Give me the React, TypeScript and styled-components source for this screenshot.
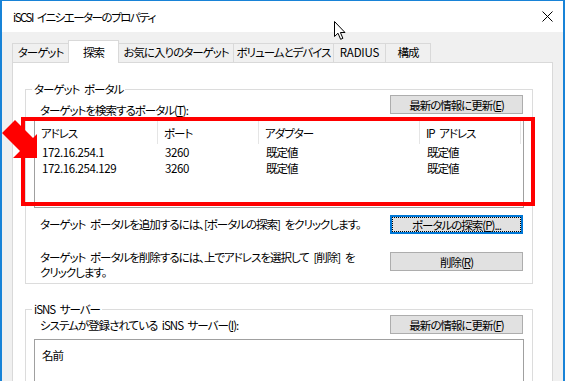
import React from "react";
import styled, { createGlobalStyle, css } from "styled-components";

const GlobalStyle = createGlobalStyle`
  html, body { margin: 0; padding: 0; background: #f0f0f0; }
  body {
    font-family: "Noto Sans CJK JP", "Noto Sans", sans-serif;
    font-size: 11.5px;
    letter-spacing: -1px;
    word-spacing: 3px;
    color: #000;
    overflow: hidden;
    font-feature-settings: "palt";
  }
  * { box-sizing: border-box; }
`;

const Screen = styled.div`
  position: relative;
  width: 565px;
  height: 381px;
  overflow: hidden;
`;

const Window = styled.div`
  width: 565px;
  height: 381px;
  display: flex;
  flex-direction: column;
  background: #f0f0f0;
  border-top: 1px solid #1883d7;
  border-left: 2px solid #1883d7;
  border-right: 2px solid #1883d7;
`;

const TitleBar = styled.div`
  flex: none;
  height: 31px;
  background: #fff;
  display: flex;
  align-items: center;
  justify-content: space-between;
  padding: 0 10px 0 11px;
`;

const TitleText = styled.span`
  line-height: 16px;
  letter-spacing: -1.5px;
`;

const CloseIcon = styled.svg`
  width: 11px;
  height: 11px;
  display: block;
`;

const Body = styled.div`
  flex: 1;
  min-height: 0;
  display: flex;
  flex-direction: column;
  padding: 8px 10px 0 10px;
`;

const TabStrip = styled.div`
  flex: none;
  height: 22px;
  display: flex;
  align-items: flex-end;
`;

const Tab = styled.div<{ $w: number; $active?: boolean; $latin?: boolean }>`
  width: ${(p) => p.$w}px;
  height: 19px;
  margin-right: -1px;
  border: 1px solid #d9d9d9;
  border-bottom: none;
  background: #f0f0f0;
  text-align: center;
  line-height: 17px;
  white-space: nowrap;
  ${(p) => p.$latin && `letter-spacing: -0.2px;`}
  ${(p) =>
    p.$active &&
    css`
      position: relative;
      z-index: 2;
      height: 23px;
      margin-bottom: -1px;
      padding-top: 3px;
      background: #fff;
    `}
`;

const Panel = styled.div`
  flex: 1;
  min-height: 0;
  background: #fff;
  border: 1px solid #d9d9d9;
  border-bottom: none;
  padding: 19px 19px 0 12px;
  display: flex;
  flex-direction: column;
`;

const GroupBox = styled.fieldset<{ $gap?: number }>`
  margin: ${(p) => p.$gap ?? 0}px 0 0 0;
  padding: 0;
  min-width: 0;
  border: 1px solid #dcdcdc;
  flex: none;
`;

const Legend = styled.legend`
  margin-left: 6px;
  padding: 0 2px;
  line-height: 14px;
`;

const GroupBody = styled.div<{ $pb: number }>`
  display: flex;
  flex-direction: column;
  padding: 0 8px ${(p) => p.$pb}px 8px;
`;

const ControlRow = styled.div<{ $align: string; $mt: number; $h?: number }>`
  display: flex;
  justify-content: space-between;
  align-items: ${(p) => p.$align};
  margin-top: ${(p) => p.$mt}px;
  padding: 0 1px 0 6px;
  ${(p) => p.$h && `height: ${p.$h}px;`}
`;

const Label = styled.span<{ $self?: string; $mb?: number }>`
  line-height: 16px;
  white-space: nowrap;
  ${(p) => p.$self && `align-self: ${p.$self};`}
  margin-bottom: ${(p) => p.$mb ?? 0}px;
`;

const Note = styled.p<{ $mt?: number }>`
  margin: ${(p) => p.$mt ?? 0}px 0 0 0;
  line-height: 15px;
  white-space: nowrap;
`;

const Button = styled.button<{ $focused?: boolean }>`
  flex: none;
  width: 133px;
  height: 19px;
  padding: 0;
  margin: 0;
  font: inherit;
  letter-spacing: inherit;
  word-spacing: inherit;
  line-height: 16px;
  color: #000;
  background: #e1e1e1;
  border: 1px solid #adadad;
  ${(p) =>
    p.$focused &&
    css`
      border-color: #0078d7;
      box-shadow: inset 0 0 0 1px #0078d7;
      outline: 1px dotted #000;
      outline-offset: -3px;
    `}
`;

const ListView = styled.div<{ $h?: number; $mt?: number }>`
  margin-top: ${(p) => p.$mt ?? 0}px;
  height: ${(p) => p.$h ?? 80}px;
  border: 1px solid #a0a0a0;
  background: #fff;
  display: flex;
  flex-direction: column;
  overflow: hidden;
`;

const cols = "123px 101px 161px 101px";

const HeaderRow = styled.div`
  display: grid;
  grid-template-columns: ${cols};
  height: 23px;
  flex: none;
`;

const HeaderCell = styled.div`
  border-right: 1px solid #e5e5e5;
  padding: 4px 0 0 6px;
  line-height: 16px;
  white-space: nowrap;
`;

const DataRow = styled.div`
  display: grid;
  grid-template-columns: ${cols};
  height: 16px;
  flex: none;
`;

const DataCell = styled.div<{ $latin?: boolean }>`
  padding-left: 7px;
  line-height: 16px;
  white-space: nowrap;
  ${(p) => p.$latin && `letter-spacing: -0.4px;`}
`;

const SimpleHeader = styled.div`
  padding: 7px 0 0 7px;
  line-height: 16px;
`;

const Overlay = styled.svg`
  position: absolute;
  left: 0;
  top: 0;
  pointer-events: none;
`;

const RedFrame = styled.div`
  position: absolute;
  left: 21px;
  top: 117px;
  width: 514px;
  height: 89px;
  border: 4px solid #ff0000;
  pointer-events: none;
`;

const Cursor = styled.svg`
  position: absolute;
  left: 334px;
  top: 21px;
  width: 14px;
  height: 20px;
  pointer-events: none;
`;

const tabs = [
  { label: "ターゲット", w: 57 },
  { label: "探索", w: 51, active: true },
  { label: "お気に入りのターゲット", w: 116 },
  { label: "ボリュームとデバイス", w: 101 },
  { label: "RADIUS", w: 53, latin: true },
  { label: "構成", w: 46 },
];

const portals = [
  { addr: "172.16.254.1", port: "3260", adapter: "既定値", ip: "既定値" },
  { addr: "172.16.254.129", port: "3260", adapter: "既定値", ip: "既定値" },
];

export default function App() {
  return (
    <Screen>
      <GlobalStyle />
      <Window>
        <TitleBar>
          <TitleText>iSCSI イニシエーターのプロパティ</TitleText>
          <CloseIcon viewBox="0 0 11 11">
            <path d="M0.5 0.5 L10.5 10.5 M10.5 0.5 L0.5 10.5" stroke="#000" strokeWidth="1" fill="none" />
          </CloseIcon>
        </TitleBar>
        <Body>
          <TabStrip>
            {tabs.map((t) => (
              <Tab key={t.label} $w={t.w} $active={t.active} $latin={t.latin}>
                {t.label}
              </Tab>
            ))}
          </TabStrip>
          <Panel>
            <GroupBox>
              <Legend>ターゲット ポータル</Legend>
              <GroupBody $pb={3}>
                <ControlRow $align="flex-start" $mt={-1} $h={25}>
                  <Label $self="flex-end" $mb={2}>
                    ターゲットを検索するポータル(<u>T</u>):
                  </Label>
                  <Button>
                    最新の情報に更新(<u>E</u>)
                  </Button>
                </ControlRow>
                <ListView $h={88}>
                  <HeaderRow>
                    <HeaderCell>アドレス</HeaderCell>
                    <HeaderCell>ポート</HeaderCell>
                    <HeaderCell>アダプター</HeaderCell>
                    <HeaderCell>IP アドレス</HeaderCell>
                  </HeaderRow>
                  {portals.map((p) => (
                    <DataRow key={p.addr}>
                      <DataCell $latin>{p.addr}</DataCell>
                      <DataCell $latin>{p.port}</DataCell>
                      <DataCell>{p.adapter}</DataCell>
                      <DataCell>{p.ip}</DataCell>
                    </DataRow>
                  ))}
                </ListView>
                <ControlRow $align="center" $mt={7}>
                  <Note>ターゲット ポータルを追加するには、[ポータルの探索] をクリックします。</Note>
                  <Button $focused>
                    ポータルの探索(<u>P</u>)...
                  </Button>
                </ControlRow>
                <ControlRow $align="flex-start" $mt={18}>
                  <Note $mt={-2}>
                    ターゲット ポータルを削除するには、上でアドレスを選択して [削除] を
                    <br />
                    クリックします。
                  </Note>
                  <Button>
                    削除(<u>R</u>)
                  </Button>
                </ControlRow>
              </GroupBody>
            </GroupBox>
            <GroupBox $gap={18}>
              <Legend>iSNS サーバー</Legend>
              <GroupBody $pb={20}>
                <ControlRow $align="center" $mt={-1}>
                  <Label>
                    システムが登録されている iSNS サーバー(<u>I</u>):
                  </Label>
                  <Button>
                    最新の情報に更新(<u>F</u>)
                  </Button>
                </ControlRow>
                <ListView $mt={5}>
                  <SimpleHeader>名前</SimpleHeader>
                </ListView>
              </GroupBody>
            </GroupBox>
          </Panel>
        </Body>
      </Window>
      <RedFrame />
      <Overlay width="45" height="165" viewBox="0 0 45 165">
        <polygon points="15,120 33,138 37,134 37,158 13,158 20,151 2,133" fill="#ff0000" />
      </Overlay>
      <Cursor viewBox="0 0 14 20">
        <path
          d="M0.5 0.5 L0.5 15.5 L4 12.2 L6.6 18.3 L8.9 17.3 L6.4 11.5 L11 11.5 Z"
          fill="#fff"
          stroke="#000"
          strokeWidth="1"
          strokeLinejoin="miter"
        />
      </Cursor>
    </Screen>
  );
}
